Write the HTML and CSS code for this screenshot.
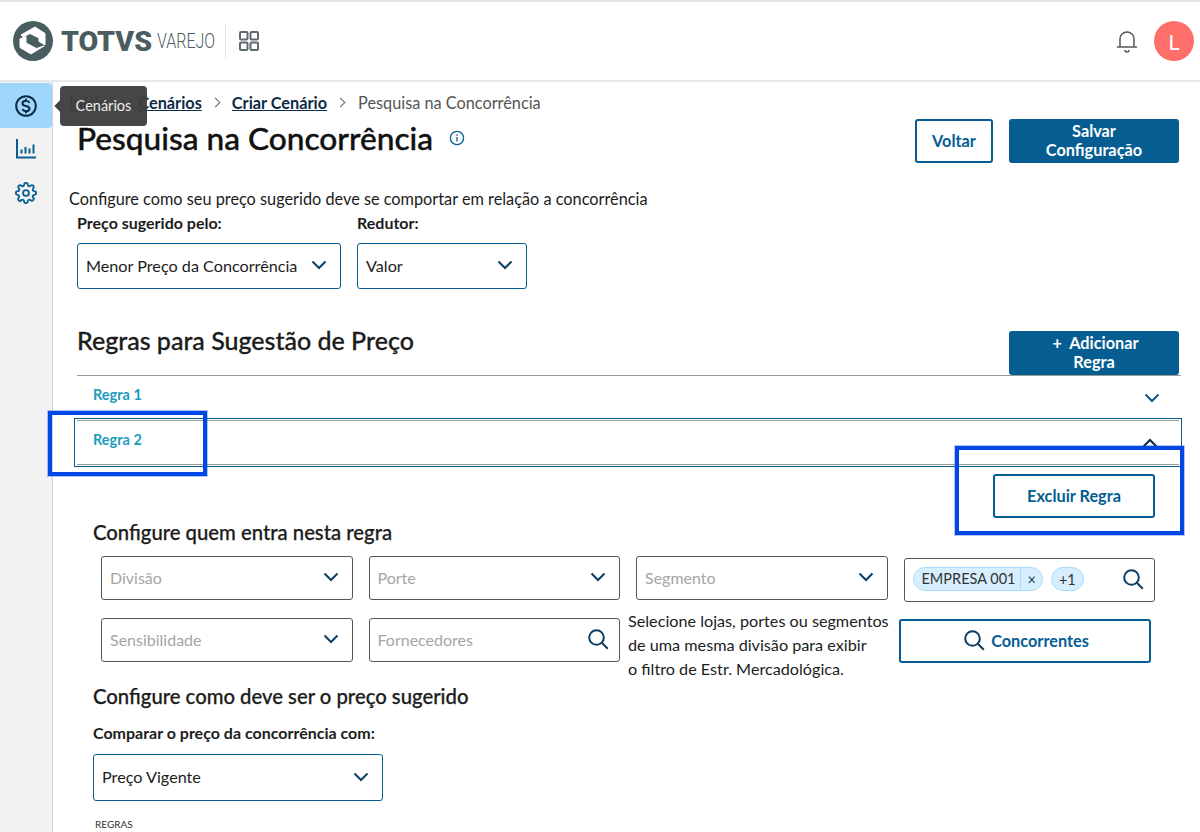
FILE: index.html
```html
<!DOCTYPE html>
<html lang="pt-BR">
<head>
<meta charset="utf-8">
<title>Pesquisa na Concorrência</title>
<link rel="stylesheet" href="styles.css">
</head>
<body>
<header class="topbar">
  <div class="brand">
    <svg class="logo-mark" width="40" height="40" viewBox="0 0 40 40"><circle cx="20" cy="20" r="20" fill="#4a5d61"/><path d="M8 14 22 6l10 6.500V24l-6-3.500V17l-9-4.500-7 3.500Z" fill="#fff" stroke="#fff" stroke-linejoin="round"/><path d="M7 18l6-2.500V22l10.500 5.500L31 25l-13 8-11-6.500Z" fill="#fff" stroke="#fff" stroke-linejoin="round"/></svg>
    <span class="brand-name">TOTVS</span>
    <span class="brand-sub">VAREJO</span>
    <span class="brand-sep"></span>
    <svg class="apps" width="22" height="22" viewBox="0 0 22 22" fill="none" stroke="#5f6a6d" stroke-width="2"><rect x="2" y="2" width="7.500" height="7.500" rx="1"/><rect x="12.500" y="2" width="7.500" height="7.500" rx="1"/><rect x="2" y="12.500" width="7.500" height="7.500" rx="1"/><rect x="12.500" y="12.500" width="7.500" height="7.500" rx="1"/></svg>
  </div>
  <div class="top-actions">
    <svg width="22" height="24" viewBox="0 0 22 24" fill="none" stroke="#555" stroke-width="1.500"><path d="M4 17.500V10a7 7 0 0 1 14 0v7.500"/><path d="M1.500 18h19" stroke-linecap="round"/><path d="M9 21a2 2 0 0 0 4 0"/></svg>
    <span class="avatar">L</span>
  </div>
</header>
<div class="layout">
  <aside class="sidebar">
    <a class="side-item active"><svg width="24" height="24" viewBox="0 0 24 24" fill="none" stroke="#0c2b45" stroke-width="2"><circle cx="12" cy="12" r="9.800"/><path d="M15.500 8.800c-.6-1.300-2-2-3.500-2-2 0-3.500 1-3.500 2.600 0 3.600 7 1.600 7 5.200 0 1.600-1.500 2.600-3.500 2.600-1.600 0-3-.7-3.600-2M12 4.800v2M12 17.200v2"/></svg></a>
    <a class="side-item"><svg width="22" height="22" viewBox="0 0 22 22" fill="none" stroke="#0a5f92" stroke-width="2"><path d="M2 1v18.500h19"/><path d="M6.500 11.500v4M10.500 9v6.500M14.500 10.500v5M18.500 6.500v9"/></svg></a>
    <a class="side-item"><svg width="22" height="22" viewBox="0 0 24 24" fill="none" stroke="#0a5f92" stroke-width="2" stroke-linejoin="round"><circle cx="12" cy="12" r="3.200"/><path d="M19.400 15a1.700 1.700 0 0 0 .3 1.800l.1.100a2 2 0 1 1-2.900 2.900l-.1-.1a1.700 1.700 0 0 0-2.900 1.200V21a2 2 0 1 1-4 0v-.1a1.700 1.700 0 0 0-2.900-1.100l-.1.100a2 2 0 1 1-2.900-2.900l.1-.1a1.700 1.700 0 0 0-1.200-2.900H3a2 2 0 1 1 0-4h.1a1.700 1.700 0 0 0 1.100-2.900l-.1-.1a2 2 0 1 1 2.900-2.900l.1.100a1.700 1.700 0 0 0 1.800.3h.1a1.700 1.700 0 0 0 1-1.500V3a2 2 0 1 1 4 0v.1a1.700 1.700 0 0 0 2.900 1.100l.1-.1a2 2 0 1 1 2.900 2.900l-.1.100a1.700 1.700 0 0 0-.3 1.800v.1a1.700 1.700 0 0 0 1.500 1H21a2 2 0 1 1 0 4h-.1a1.700 1.700 0 0 0-1.500 1Z"/></svg></a>
  </aside>
  <main class="content">
    <div class="page-head">
      <div class="page-titles">
        <nav class="crumbs">
          <a>Início</a><span class="sep"></span><a>Cenários</a><span class="sep"></span><a>Criar Cenário</a><span class="sep"></span><span class="crumb-current">Pesquisa na Concorrência</span>
        </nav>
        <div class="title-row">
          <h1>Pesquisa na Concorrência</h1>
          <svg width="16" height="16" viewBox="0 0 16 16" fill="none" stroke="#0a5f92" stroke-width="1.300"><circle cx="8" cy="8" r="6.600"/><path d="M8 7v4.500M8 4.300v1.400"/></svg>
        </div>
      </div>
      <div class="head-actions">
        <button class="btn btn-outline btn-back">Voltar</button>
        <button class="btn btn-solid btn-wide">Salvar Configuração</button>
      </div>
    </div>
    <p class="intro">Configure como seu preço sugerido deve se comportar em relação a concorrência</p>
    <div class="top-fields">
      <div class="field">
        <label>Preço sugerido pelo:</label>
        <div class="select sel-price">Menor Preço da Concorrência<svg class="chev" width="16" height="10" viewBox="0 0 16 10"><path d="M1.500 1.500 8 8l6.500-6.500"/></svg></div>
      </div>
      <div class="field">
        <label>Redutor:</label>
        <div class="select sel-red">Valor<svg class="chev" width="16" height="10" viewBox="0 0 16 10"><path d="M1.500 1.500 8 8l6.500-6.500"/></svg></div>
      </div>
    </div>
    <div class="rules-head">
      <h2>Regras para Sugestão de Preço</h2>
      <button class="btn btn-solid btn-wide"><span class="plus">+</span> Adicionar Regra</button>
    </div>
    <div class="acc-item">
      <span>Regra 1</span>
      <svg class="acc-chev" width="16" height="10" viewBox="0 0 16 10"><path d="M1.500 1.500 8 8l6.500-6.500"/></svg>
    </div>
    <div class="acc-open">
      <div class="acc-inner">
        <span>Regra 2</span>
        <svg class="acc-chev up" width="16" height="10" viewBox="0 0 16 10"><path d="M1.500 8.500 8 2l6.500 6.500"/></svg>
      </div>
    </div>
    <div class="acc-body">
      <div class="del-row"><button class="btn btn-outline btn-del">Excluir Regra</button></div>
      <h3>Configure quem entra nesta regra</h3>
      <div class="filters">
        <div class="f-input muted">Divisão<svg class="chev" width="16" height="10" viewBox="0 0 16 10"><path d="M1.500 1.500 8 8l6.500-6.500"/></svg></div>
        <div class="f-input muted">Porte<svg class="chev" width="16" height="10" viewBox="0 0 16 10"><path d="M1.500 1.500 8 8l6.500-6.500"/></svg></div>
        <div class="f-input muted">Segmento<svg class="chev" width="16" height="10" viewBox="0 0 16 10"><path d="M1.500 1.500 8 8l6.500-6.500"/></svg></div>
        <div class="f-input f-tags">
          <span class="tags"><span class="tag"><span class="tag-text">EMPRESA 001</span><span class="tag-x">×</span></span><span class="tag tag-more">+1</span></span>
          <svg class="search" width="22" height="22" viewBox="0 0 22 22"><circle cx="9.500" cy="9.500" r="7.300"/><path d="m14.800 14.800 6 6"/></svg>
        </div>
        <div class="f-input muted">Sensibilidade<svg class="chev" width="16" height="10" viewBox="0 0 16 10"><path d="M1.500 1.500 8 8l6.500-6.500"/></svg></div>
        <div class="f-input muted">Fornecedores<svg class="search" width="22" height="22" viewBox="0 0 22 22"><circle cx="9.500" cy="9.500" r="7.300"/><path d="m14.800 14.800 6 6"/></svg></div>
        <p class="hint">Selecione lojas, portes ou segmentos<br>de uma mesma divisão para exibir<br>o filtro de Estr. Mercadológica.</p>
        <button class="btn btn-outline btn-conc"><svg class="search" width="22" height="22" viewBox="0 0 22 22"><circle cx="9.500" cy="9.500" r="7.300"/><path d="m14.800 14.800 6 6"/></svg>Concorrentes</button>
      </div>
      <h3 class="h3-price">Configure como deve ser o preço sugerido</h3>
      <label class="lbl-compare">Comparar o preço da concorrência com:</label>
      <div class="select sel-compare">Preço Vigente<svg class="chev" width="16" height="10" viewBox="0 0 16 10"><path d="M1.500 1.500 8 8l6.500-6.500"/></svg></div>
      <div class="mini">REGRAS</div>
    </div>
  </main>
</div>
<div class="tooltip">Cenários</div>
<div class="mark mark-a"></div>
<div class="mark mark-b"></div>
</body>
</html>
```
FILE: styles.css
```css
* { box-sizing: border-box; }
html, body { height: 832px; overflow: hidden; }
body { margin: 0; background: #fff; color: #1c1c1c; font-family: "Lato", "Noto Sans", sans-serif; font-size: 16px; position: relative; }

.topbar { height: 82px; border-top: 2px solid #e4e4e4; border-bottom: 2px solid #e8e8e8; display: flex; align-items: center; justify-content: space-between; padding: 0 6px 0 13px; }
.brand { display: flex; align-items: center; }
.brand-name { font-family: "Roboto", sans-serif; font-weight: 900; font-size: 28.500px; color: #4a5d61; margin-left: 8px; }
.brand-sub { display: inline-block; font-family: "Roboto", sans-serif; font-weight: 300; font-size: 20px; color: #4a5d61; margin-left: 5px; margin-right: -17px; transform: scaleX(.8); transform-origin: left center; }
.brand-sep { width: 1px; height: 35px; background: #e4e4e4; margin: 0 12px; }
.top-actions { display: flex; align-items: center; gap: 16px; }
.avatar { width: 40px; height: 40px; border-radius: 50%; background: #ff6f69; color: #fff; display: flex; align-items: center; justify-content: center; font-size: 22px; }

.layout { display: flex; height: 750px; }
.sidebar { width: 53px; flex: none; background: #f2f2f2; border-right: 1px solid #d4d4d4; display: flex; flex-direction: column; padding-top: 1px; }
.side-item { height: 44px; display: flex; align-items: center; justify-content: center; }
.side-item.active { background: #9fd6fc; border-radius: 0 4px 4px 0; width: 52px; height: 45px; margin-bottom: -1px; }
.side-item svg { display: block; }

.content { flex: 1; min-width: 0; padding: 11px 20px 0 16px; }
.page-head { display: flex; justify-content: space-between; padding-left: 8px; }
.crumbs { display: flex; align-items: center; height: 20px; font-size: 16.300px; margin: -1px 0 0 -8px; }
.crumbs a { color: #0c2b45; text-decoration: underline; font-weight: 700; }
.sep { width: 7px; height: 7px; border-top: 1.500px solid #666; border-right: 1.500px solid #666; transform: rotate(45deg); margin: 0 13px 0 10px; }
.crumb-current { color: #555; margin-left: 1px; }
.title-row { display: flex; align-items: center; gap: 16px; margin-top: 4px; }
h1 { margin: 0; font-size: 31.650px; font-weight: 500; line-height: 44px; color: #111; -webkit-text-stroke: .4px #111; }
.head-actions { display: flex; gap: 16px; margin-top: 26px; margin-right: 1px; }
.btn { font-family: inherit; font-size: 16.300px; font-weight: 700; line-height: 19px; border-radius: 3px; cursor: pointer; height: 44px; padding: 0 8px 2px; }
.btn-outline { background: #fff; border: 2px solid #055d92; color: #055d92; }
.btn-solid { background: #055d92; border: 2px solid #055d92; color: #fff; }
.btn-back { width: 78px; }
.btn-wide { width: 170px; padding: 0 28px 2px; }
.plus { margin: 0 4px 0 3px; }

.intro { margin: 26px 0 0; line-height: 20px; font-size: 16.300px; }
.top-fields { display: flex; gap: 16px; margin: 4px 0 0 8px; }
.field label { display: block; font-weight: 700; font-size: 16px; line-height: 20px; margin-bottom: 10px; }
.select { height: 46px; border: 1px solid #055d92; border-radius: 3px; padding: 0 13px 2px 8px; display: flex; align-items: center; justify-content: space-between; font-size: 16.200px; }
.sel-price { width: 264px; }
.sel-red { width: 170px; }
.chev, .acc-chev { fill: none; stroke: #0c4066; stroke-width: 2; flex: none; }

.rules-head { display: flex; justify-content: space-between; margin: 42px 1px 0 8px; height: 44px; }
h2 { margin: -1px 0 0; font-size: 25px; font-weight: 500; line-height: 20px; -webkit-text-stroke: .3px #1c1c1c; }
.acc-item, .acc-inner { display: flex; justify-content: space-between; font-weight: 700; font-size: 14.500px; color: #1d9cc0; padding: 10px 21px 0 16px; border-top: 1px solid #999; margin-left: 8px; margin-right: -1px; }
.acc-item { height: 43px; }
.acc-chev { margin-top: 7px; stroke: #055d92; }
.acc-open { margin: 0 -2px 0 5px; border: 1px solid #055d92; height: 49px; padding: 1px 2px; }
.acc-inner { height: 45px; margin: 0; border-bottom: 1px solid #999; padding-top: 10px; }
.acc-inner .up { stroke: #0c2b45; margin-top: 7px; }
.acc-body { padding-left: 24px; }
.del-row { display: flex; justify-content: flex-end; margin-top: 7px; padding-right: 25px; }
.btn-del { width: 162px; }
h3 { margin: 4px 0 0; font-size: 20.300px; font-weight: 500; line-height: 20px; -webkit-text-stroke: .25px #1c1c1c; }
.filters { display: grid; grid-template-columns: repeat(4, 251.500px); grid-template-rows: 44px 44px; column-gap: 16px; row-gap: 18px; margin: 14px 0 0 8px; height: 106px; }
.f-input { height: 44px; border: 1px solid #555; border-radius: 3px; display: flex; align-items: center; justify-content: space-between; padding: 0 10px 2px 8px; font-size: 16px; }
.f-input .chev { margin-right: 3px; }
.muted { color: #a5a5a5; }
.search { fill: none; stroke: #0c3c5e; stroke-width: 2; flex: none; }
.f-tags { margin-top: 2px; padding-left: 8px; }
.tags { display: flex; gap: 8px; }
.tag { height: 24px; border: 1px solid #a9dcfb; background: #d6eefd; border-radius: 12px; display: flex; align-items: center; font-size: 14.500px; color: #333; }
.tag-text { padding: 0 5px 0 8px; border-right: 1px solid #a9dcfb; line-height: 22px; }
.tag-x { padding: 0 6px; color: #0c3c5e; }
.tag-more { padding: 0 7px; }
.hint { margin: -9px 0 0 -8px; width: 272px; font-size: 16.200px; line-height: 24px; }
.btn-conc { display: flex; align-items: center; justify-content: center; gap: 6px; width: 252px; margin-top: 1px; margin-left: -5px; padding-left: 11px; }
.h3-price { margin-top: 24px; }
.lbl-compare { display: block; margin-top: 17px; font-weight: 700; font-size: 16px; line-height: 20px; }
.sel-compare { width: 290px; height: 47px; margin-top: 11px; }
.mini { font-size: 10px; color: #333; margin: 17px 0 0 2px; line-height: 12px; }

.tooltip { position: absolute; left: 60px; top: 86px; width: 87px; height: 40px; padding-bottom: 2px; background: rgba(60,60,60,.95); border-radius: 4px; color: #eee; font-size: 14.500px; display: flex; align-items: center; justify-content: center; }
.tooltip::before { content: ""; position: absolute; left: -4px; top: 16px; width: 8px; height: 8px; background: #444; transform: rotate(45deg); }
.mark { position: absolute; border: 4px solid #0047e6; box-shadow: 0 0 0 1px rgba(0,71,230,.3); }
.mark-a { left: 48px; top: 411px; width: 159px; height: 65px; }
.mark-b { left: 955px; top: 446px; width: 229px; height: 89px; }
```
